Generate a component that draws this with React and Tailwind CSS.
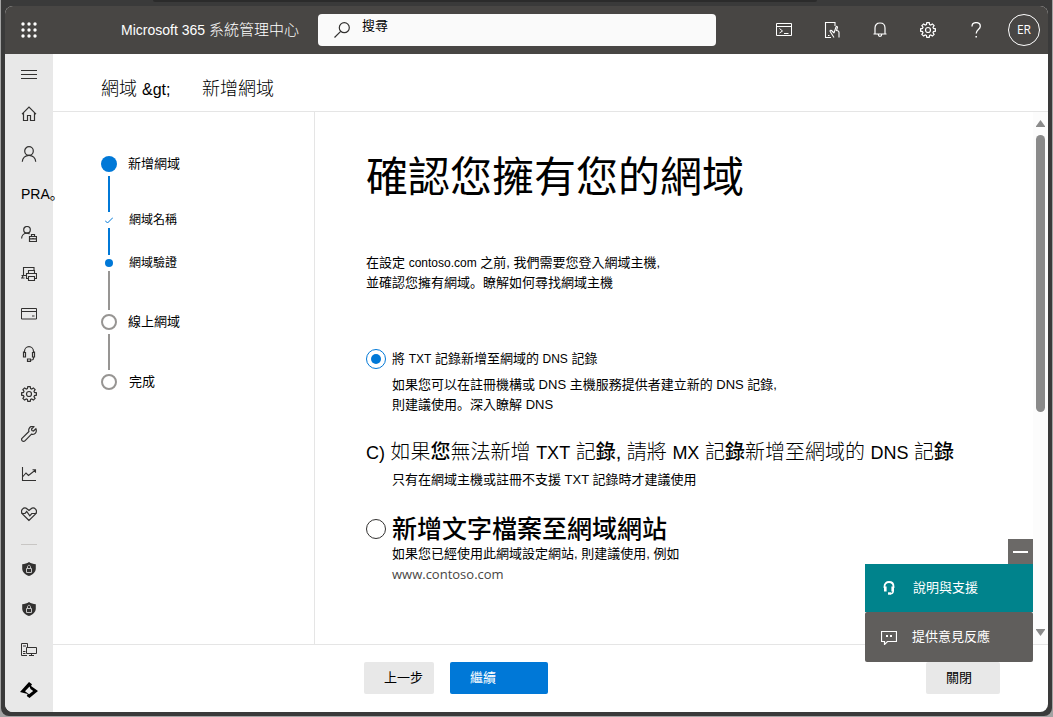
import React from "react";

const FONT = "font-['Liberation_Sans','Noto_Sans_CJK_TC',sans-serif]";

function Icon({ children, size = 16, className = "", strokeWidth = 1 }) {
  return (
    <svg
      width={size}
      height={size}
      viewBox="0 0 16 16"
      fill="none"
      stroke="currentColor"
      strokeWidth={strokeWidth}
      className={className}
      aria-hidden="true"
    >
      {children}
    </svg>
  );
}

const GEAR =
  "M6.8 0.6h2.4l0.4 1.9 1.1 0.5 1.7-1.1 1.7 1.7-1.1 1.7 0.5 1.1 1.9 0.4v2.4l-1.9 0.4-0.5 1.1 1.1 1.7-1.7 1.7-1.7-1.1-1.1 0.5-0.4 1.9H6.8l-0.4-1.9-1.1-0.5-1.7 1.1-1.7-1.7L3 10.700l-0.5-1.1-1.9-0.4V6.800l1.900-0.400L3 5.300 1.900 3.600l1.700-1.700L5.300 3l1.100-0.500z";

const icons = {
  menu: <path d="M0 4.500h16M0 8.500h16M0 12.500h16" />,
  home: <path strokeWidth="1.2" d="M1 8.200 8 1.200l7 7M2.500 7v7.500h4V9.500h3v5h4V7" />,
  user: (
    <g strokeWidth="1.2">
      <circle cx="8" cy="5" r="4.300" />
      <path d="M1.300 15.800c0-3.800 3-6.500 6.700-6.500s6.700 2.700 6.700 6.500" />
    </g>
  ),
  userBag: (
    <g strokeWidth="1.2">
      <circle cx="6" cy="3.800" r="3.300" />
      <path d="M0.600 12.500C0.600 9.300 3 7.200 6 7.200c1 0 1.900 0.200 2.600 0.700M8.500 10.500h7v5h-7zM8.500 12.800h7M10.500 10.500v-2h3v2M12 12v1.500" />
    </g>
  ),
  devices: (
    <path
      strokeWidth="1.1"
      d="M5 9.500H0.500M2.500 9.500v-8h10.500v3M7.500 7.500v-3h6v3M7.500 12.500h-2v-5h10v5h-2M7.500 10.500h6v4h-6zM3.500 12H0.800l1.500-2.500"
    />
  ),
  card: <path d="M0.500 2.500h15v10.500h-15zM0.500 5.500h15M11 10h2.500" />,
  headset: (
    <path
      strokeWidth="1.2"
      d="M3.500 7V5.500C3.500 2.700 5.500 0.700 8 0.700s4.500 2 4.500 4.800V7M2.500 6.500h2v4.500h-2zM11.500 6.500h2v4.500h-2zM2.500 9V5.500M13.500 9V5.500M12.500 11v1.200c0 1-.6 1.800-1.800 1.800H9.500M6.500 13h3v2.300h-3z"
    />
  ),
  gear: (
    <g strokeWidth="1.2">
      <path d={GEAR} />
      <circle cx="8" cy="8" r="2.500" />
    </g>
  ),
  wrench: (
    <path
      strokeWidth="1.2"
      d="M14.900 2.700 12.500 5l-1.600-0.400-0.400-1.600L12.900 0.700C11 0 8.800 0.800 8 2.700c-0.400 1-0.400 1.900-0.100 2.800L1.200 12.100c-0.800 0.800-0.800 1.900 0 2.700s1.900 0.800 2.700 0l6.600-6.700c0.900 0.300 1.900 0.300 2.800-0.100 1.900-0.800 2.500-3.300 1.600-5.300z"
    />
  ),
  chart: (
    <path strokeWidth="1.1" d="M1.500 1v13.500H15M1.500 11l3.500-4 2.500 2.500L14.500 4M11.500 3.800h3v3" />
  ),
  heart: (
    <g strokeWidth="1.2">
      <path d="M8 14.500 1.600 8.100C0.300 6.600 0.300 4.500 1.500 3.200s3.300-1.400 4.700-0.200L8 4.500 9.800 3c1.400-1.200 3.500-1.100 4.700 0.200s1.200 3.400-0.100 4.900z" />
      <path d="M0.500 7.500H4L5.700 5.500l3.100 4.300 2-2.300h4.700" />
    </g>
  ),
  shield: (
    <>
      <path
        fill="#323130"
        stroke="none"
        d="M8 1c2 1.400 4.300 2.100 6.800 2.200v4.300c0 3.500-2.800 6-6.800 7.500-4-1.500-6.800-4-6.800-7.500V3.200C3.700 3.100 6 2.400 8 1z"
      />
      <path stroke="#c4c4c4" d="M5.500 7.500h5v4h-5zM6.500 7.500V5.800c0-2 3-2 3 0v1.700" />
    </>
  ),
  desktop: (
    <path d="M6 14.500H0.500v-12H6.500v4M2 5h3M2 10.500h2.500M2 12.500h2.500M5.500 6.500h10v6h-10zM10.500 12.500v2M8 14.500h5" />
  ),
  powershell: <path d="M0.500 1.500h15v12h-15zM0.500 4.500h15M3.500 6.500l3 2.500-3 2M8 11.500h4.500" />,
  touch: (
    <path
      strokeWidth="1.1"
      d="M7 15.500H1.500V.5H11V4M4 13.500h1.500M10 11l2-6c.4-1 1.700-.5 1.400.5l-.9 3 1.300.3c.9.200 1.200.9 1.200 1.700v5M10 11 7.500 8.500c-.8-.8-1.900.3-1.200 1.200l3.700 5.800"
    />
  ),
  bell: (
    <path
      strokeWidth="1.2"
      d="M3 11.500V6c0-3 2-5 5-5s5 2 5 5v5.500M1.500 12h13M6.300 12.500c0 2.500 3.400 2.500 3.400 0"
    />
  ),
  help: (
    <>
      <path
        strokeWidth="1.3"
        d="M4 4.500C4 2 5.800.6 8.200.6S12.300 2 12.300 4.200c0 3.300-4.100 3.500-4.100 7.300"
      />
      <path d="M8.200 14v1.500" strokeWidth="1.5" />
    </>
  ),
};

const navItems = [
  { icon: "menu", label: "導覽功能表" },
  { icon: "home", label: "首頁" },
  { icon: "user", label: "使用者" },
  { text: "PRA。" },
  { icon: "userBag", label: "角色" },
  { icon: "devices", label: "資源" },
  { icon: "card", label: "計費" },
  { icon: "headset", label: "支援" },
  { icon: "gear", label: "設定" },
  { icon: "wrench", label: "安裝" },
  { icon: "chart", label: "報表" },
  { icon: "heart", label: "健康情況" },
];

const adminItems = [
  { icon: "shield", label: "安全性" },
  { icon: "shield", label: "合規性" },
  { icon: "desktop", label: "端點" },
];

const headerItems = [
  { icon: "powershell", label: "Cloud Shell" },
  { icon: "touch", label: "行動應用程式" },
  { icon: "bell", label: "通知" },
  { icon: "gear", label: "設定" },
  { icon: "help", label: "說明" },
];

function Header() {
  return (
    <header className="flex h-12 shrink-0 items-center bg-[#484644] text-white">
      <button aria-label="應用程式啟動器" className="flex h-12 w-12 items-center justify-center">
        <svg width="16" height="16" viewBox="0 0 16 16" fill="currentColor" aria-hidden="true">
          {[2, 8, 14].map((y) =>
            [2, 8, 14].map((x) => <circle key={`${x}-${y}`} cx={x} cy={y} r="1.700" />)
          )}
        </svg>
      </button>
      <div className="w-[265px] shrink-0 pl-[68px] text-sm whitespace-nowrap">
        Microsoft 365 <span className="text-[15px] font-light">系統管理中心</span>
      </div>
      <label className="flex h-8 min-w-0 flex-[0_1_398px] items-center gap-3 rounded-sm bg-[#fafafa] pl-4 text-[#323130]">
        <Icon className="shrink-0" strokeWidth={1.2}>
          <circle cx="10.300" cy="5.700" r="5" />
          <path d="M6.700 9.300 0.500 15.500" />
        </Icon>
        <input
          type="search"
          aria-label="搜尋"
          placeholder="搜尋"
          className="mb-2 min-w-0 flex-1 bg-transparent text-[13px] leading-5 text-black outline-none placeholder:text-black"
        />
      </label>
      <div className="ml-auto flex items-center">
        {headerItems.map((item) => (
          <button
            key={item.label}
            aria-label={item.label}
            className="flex h-12 w-12 items-center justify-center"
          >
            <Icon>{icons[item.icon]}</Icon>
          </button>
        ))}
        <button className="mr-2 ml-2 flex size-8 items-center justify-center rounded-full border border-white font-['Open_Sans',sans-serif] text-xs">
          ER
        </button>
      </div>
    </header>
  );
}

function NavButton({ item }) {
  return (
    <button
      aria-label={item.label}
      className="flex h-10 w-12 items-center justify-center text-[#323130]"
    >
      {item.text ? (
        <span className="ml-4 w-8 text-left font-['Liberation_Sans','Noto_Sans_CJK_SC',sans-serif] text-sm whitespace-nowrap text-black">
          {item.text}
        </span>
      ) : (
        <Icon>{icons[item.icon]}</Icon>
      )}
    </button>
  );
}

function Sidebar() {
  return (
    <nav className="w-12 shrink-0 bg-[#e8e8e8]">
      {navItems.map((item, i) => (
        <NavButton key={i} item={item} />
      ))}
      <hr className="mx-4 mt-2.5 mb-1 border-[#c8c6c4]" />
      {adminItems.map((item, i) => (
        <NavButton key={i} item={item} />
      ))}
      <button aria-label="所有系統管理中心" className="flex h-10 w-12 items-center justify-center">
        <svg width="18" height="18" viewBox="0 -2 18 18" fill="black" aria-hidden="true">
          <path
            fillRule="evenodd"
            d="M9 0 12 2.200 11 4l7 5-8.500 7-2.800-2 1-2L0 10zM9.500 4.500 5 9.300l4 3 4.200-3.200-2.700-2z"
          />
        </svg>
      </button>
    </nav>
  );
}

function Connector({ className }) {
  return <span className={`ml-[7px] block w-0.5 ${className}`} />;
}

function Steps() {
  return (
    <aside className="w-[262px] shrink-0 border-r border-[#e5e5e5] pt-10 pl-12 text-[13px]">
      <ol>
        <li>
          <div className="flex h-6 items-center gap-[11px]">
            <span className="size-4 rounded-full bg-[#0078d7]" />
            新增網域
          </div>
          <Connector className="h-9 bg-[#0078d7]" />
        </li>
        <li>
          <div className="flex h-4 items-center gap-3 text-xs">
            <Icon className="px-1 text-[#0078d7]" strokeWidth={2}>
              <path d="M0 9l5 5L16 3" />
            </Icon>
            網域名稱
          </div>
          <Connector className="h-[27px] bg-[#0078d7]" />
        </li>
        <li>
          <div className="flex h-4 items-center gap-3 text-xs">
            <span className="flex w-4 justify-center">
              <span className="size-2 rounded-full bg-[#0078d7]" />
            </span>
            網域驗證
          </div>
          <Connector className="h-[39px] bg-[#979593]" />
        </li>
        <li>
          <div className="flex h-6 items-center gap-[11px]">
            <span className="size-4 rounded-full border-2 border-[#979593]" />
            線上網域
          </div>
          <Connector className="h-9 bg-[#979593]" />
        </li>
        <li className="flex h-6 items-center gap-3">
          <span className="size-4 rounded-full border-2 border-[#979593]" />
          完成
        </li>
      </ol>
    </aside>
  );
}

function Radio({ id, defaultChecked }) {
  return (
    <input
      id={id}
      type="radio"
      name="verify"
      defaultChecked={defaultChecked}
      className="size-5 shrink-0 appearance-none rounded-full border border-[#323130] bg-white bg-clip-content p-1 checked:border-[#0078d7] checked:bg-[#0078d7]"
    />
  );
}

// full stop that sits at the lower left of its box
function Stop() {
  return <span className="font-['Noto_Sans_CJK_SC',sans-serif] leading-none">。</span>;
}

function VerifyForm() {
  return (
    <section className="min-w-0 flex-1 overflow-hidden pt-[42px] pl-[51px] text-[13px] leading-5 whitespace-nowrap">
      <h1 className="text-[42px] leading-12">確認您擁有您的網域</h1>
      <p className="mt-[51px]">
        在設定 <span className="text-xs">contoso.com</span> 之前, 我們需要您登入網域主機,
        <br />
        並確認您擁有網域
        <Stop />
        瞭解如何尋找網域主機
      </p>

      <div className="mt-14 flex items-center gap-[6px]">
        <Radio id="txt" defaultChecked />
        <label htmlFor="txt">
          將 <span className="text-xs">TXT</span> 記錄新增至網域的 <span className="text-xs">DNS</span> 記錄
        </label>
      </div>
      <p className="mt-[6px] pl-[26px]">
        如果您可以在註冊機構或 DNS 主機服務提供者建立新的 DNS 記錄,
        <br />
        則建議使用
        <Stop />
        深入瞭解 DNS
      </p>

      <h2 className="mt-[23px] text-xl leading-7 font-light">
        <span className="text-lg">C)</span> 如果<span className="font-medium">您</span>無法新增{" "}
        <span className="text-lg">TXT</span> 記<span className="font-medium">錄</span>, 請將{" "}
        <span className="text-lg">MX</span> 記<span className="font-medium">錄</span>新增至網域的{" "}
        <span className="text-lg">DNS</span> 記<span className="font-medium">錄</span>
      </h2>
      <p className="mt-[3px] pl-[26px]">只有在網域主機或註冊不支援 TXT 記錄時才建議使用</p>

      <div className="mt-6 flex items-center gap-[6px]">
        <Radio id="file" />
        <label htmlFor="file" className="text-[25px] leading-[30px] font-medium">
          新增文字檔案至網域網站
        </label>
      </div>
      <p className="pl-[26px]">
        如果您已經使用此網域設定網站, 則建議使用, 例如
        <br />
        <span className="font-['Open_Sans',sans-serif] text-[#484644]">www.contoso.com</span>
      </p>
    </section>
  );
}

function Scrollbar() {
  return (
    <div className="flex w-[15px] shrink-0 flex-col items-center bg-[#fcfcfc] pt-2 pb-2 text-[#8a8a8a]">
      <svg width="9" height="7" viewBox="0 0 9 7" fill="currentColor" aria-hidden="true">
        <path d="M4.500 0 9 6.200V7H0v-.8z" />
      </svg>
      <div className="my-2 w-full flex-1">
        <div className="mx-auto h-[57%] w-[9px] rounded-full bg-[#8a8a8a]" />
      </div>
      <svg width="9" height="7" viewBox="0 0 9 7" fill="currentColor" aria-hidden="true">
        <path d="M4.500 7 9 .8V0H0v.8z" />
      </svg>
    </div>
  );
}

function Footer() {
  return (
    <footer className="flex shrink-0 items-center border-t border-[#e5e5e5] pt-[17px] pr-12 pb-[18px] pl-[311px] text-[13px]">
      <button className="h-8 w-[70px] rounded-xs bg-[#e8e8e8] pl-5 text-left">上一步</button>
      <button className="ml-4 h-8 w-[98px] rounded-xs bg-[#0078d7] pl-5 text-left text-white">繼續</button>
      <button className="ml-auto h-8 w-[74px] rounded-xs bg-[#e8e8e8] pl-5 text-left">關閉</button>
    </footer>
  );
}

function HelpPanel() {
  return (
    <div className="absolute right-[15px] bottom-[50px] flex w-[168px] flex-col text-[13px] text-white">
      <button
        aria-label="最小化"
        className="flex h-[25px] w-[25px] items-center justify-center self-end bg-[#6b6967]"
      >
        <span className="h-0.5 w-[15px] bg-white" />
      </button>
      <button className="flex h-12 items-center gap-4 bg-[#00838c] pl-4">
        <Icon>
          <path strokeWidth="1.8" d="M3.500 8V6.500C3.500 3.500 5.500 2 8 2s4.500 1.500 4.500 4.500V8" />
          <path strokeWidth="2.6" d="M4.300 6.500v5M11.700 6.500v5" />
          <path strokeWidth="1.4" d="M12.200 11c0 2-1 2.700-2.700 2.700" />
          <path strokeWidth="2.4" d="M7 13.500h3" />
        </Icon>
        說明與支援
      </button>
      <button className="flex h-[50px] items-center gap-[15px] rounded-xs bg-[#605e5c] pl-4">
        <Icon strokeWidth={1.2}>
          <path d="M0.500 2.500h15v10h-9l-3 3v-3h-3z" />
          <path d="M5 7h2M9 7h2" strokeWidth="2" />
        </Icon>
        提供意見反應
      </button>
    </div>
  );
}

export default function App() {
  return (
    <div className={`h-screen bg-[#a3a3a3] px-px pb-px text-black ${FONT}`}>
      <div className="flex h-full flex-col rounded-b-lg bg-[#3a3a3a] px-1 pb-1">
        <div className="mr-[231px] mb-1 ml-[148px] h-0.5 shrink-0 rounded-b-sm bg-[#2b2b2b]" />
        <div className="relative flex min-h-0 flex-1 flex-col overflow-hidden rounded-lg bg-white">
          <Header />
          <div className="flex min-h-0 flex-1">
            <Sidebar />
            <main className="flex min-w-0 flex-1 flex-col">
              <div className="flex h-[58px] shrink-0 items-center border-b border-[#e5e5e5] pt-3 pl-12 text-lg font-light">
                <a href="#domains" className="w-[101px]">
                  網域 <span className="text-base font-normal">&amp;gt;</span>
                </a>
                <span>新增網域</span>
              </div>
              <div className="flex min-h-0 flex-1">
                <Steps />
                <VerifyForm />
                <Scrollbar />
              </div>
              <Footer />
            </main>
          </div>
          <HelpPanel />
        </div>
      </div>
    </div>
  );
}
